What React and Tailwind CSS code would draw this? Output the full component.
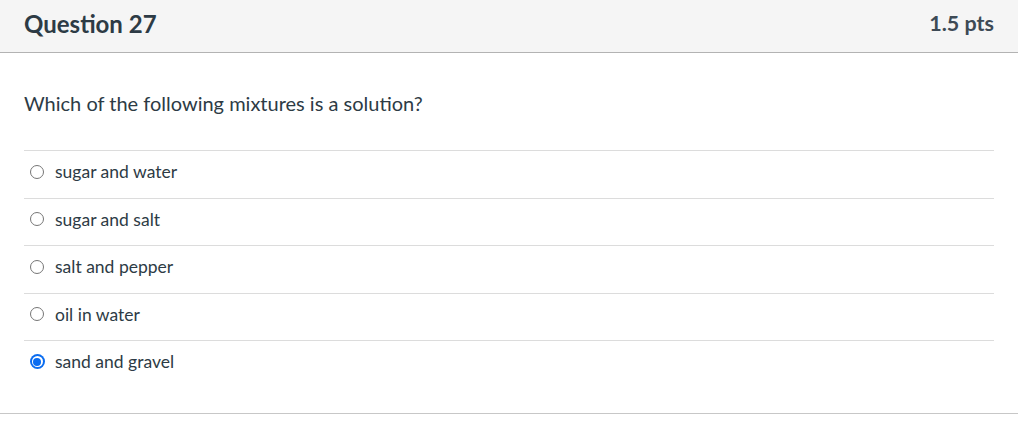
import React from "react";

const options = [
  { label: "sugar and water", checked: false },
  { label: "sugar and salt", checked: false },
  { label: "salt and pepper", checked: false },
  { label: "oil in water", checked: false },
  { label: "sand and gravel", checked: true },
];

const Radio = ({ checked }) =>
  checked ? (
    <span className="-mx-[0.5px] flex h-[15px] w-[15px] items-center justify-center rounded-full bg-[#0a6cf0]">
      <span className="flex h-[11px] w-[11px] items-center justify-center rounded-full bg-white">
        <span className="h-[8px] w-[8px] rounded-full bg-[#0a6cf0]" />
      </span>
    </span>
  ) : (
    <span className="h-[14px] w-[14px] rounded-full border border-[#767676] bg-white" />
  );

export default function App() {
  return (
    <div className="w-[1018px] bg-white font-['Lato','Noto_Sans',sans-serif] text-[#2d3b45]">
      <div className="border-b border-[#c7c7c7] pb-[25px]">
        {/* header */}
        <div className="flex h-[53px] items-center justify-between border-b border-[#b3b3b3] bg-[#f5f5f5] px-6 pb-[5px]">
          <h2 className="text-[24px] font-bold leading-none">Question 27</h2>
          <span className="text-[21.5px] font-bold leading-none text-[#3d4a55]">1.5 pts</span>
        </div>

        <div className="px-6 pt-[37px]">
          <p className="text-[20px] leading-[27px]">Which of the following mixtures is a solution?</p>

          <div className="mt-[33px]">
            {options.map((o) => (
              <div
                key={o.label}
                className="flex h-[47.5px] items-center gap-[11px] border-t border-[#dcdcdc] pb-[5px] pl-[6px]"
              >
                <Radio checked={o.checked} />
                <span className="text-[17.5px] leading-none">{o.label}</span>
              </div>
            ))}
          </div>
        </div>
      </div>
    </div>
  );
}
